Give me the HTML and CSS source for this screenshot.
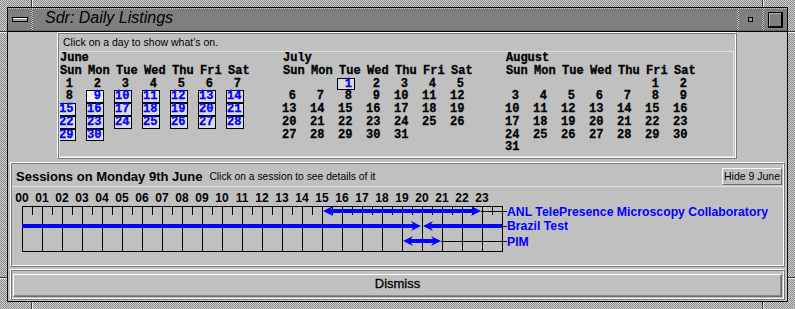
FILE: index.html
```html
<!DOCTYPE html>
<html lang="en">
<head>
  <meta charset="UTF-8">
  <title>Sdr: Daily Listings</title>
  <link rel="stylesheet" href="styles.css">
</head>
<body>
  <div class="frame">
    <span class="notch v" style="left:31px;top:0"></span>
    <span class="notch v" style="left:762px;top:0"></span>
    <span class="notch v" style="left:31px;top:302px"></span>
    <span class="notch v" style="left:762px;top:302px"></span>
    <span class="notch h" style="left:0;top:31px"></span>
    <span class="notch h" style="left:788px;top:31px"></span>
    <span class="notch h" style="left:0;top:277px"></span>
    <span class="notch h" style="left:788px;top:277px"></span>

    <div class="window">
      <div class="titlebar">
        <div class="tb-menu"><span class="menu-bar"></span></div>
        <span class="tb-sep"></span>
        <div class="tb-title">Sdr: Daily Listings</div>
        <span class="tb-sep"></span>
        <div class="tb-btn"><span class="min-dot"></span></div>
        <span class="tb-sep"></span>
        <div class="tb-btn"><span class="max-box"></span></div>
      </div>

      <div class="content">
        <div class="ridge cal-panel">
          <div class="hint">Click on a day to show what’s on.</div>
          <div class="cal-box">
            <div class="month">
              <div class="mname">June</div>
              <div>Sun</div><div>Mon</div><div>Tue</div><div>Wed</div><div>Thu</div><div>Fri</div><div>Sat</div>
              <span class="d">1</span><span class="d">2</span><span class="d">3</span><span class="d">4</span><span class="d">5</span><span class="d">6</span><span class="d">7</span>
              <span class="d">8</span><span class="d on sel">9</span><span class="d on">10</span><span class="d on">11</span><span class="d on">12</span><span class="d on">13</span><span class="d on">14</span>
              <span class="d on">15</span><span class="d on">16</span><span class="d on">17</span><span class="d on">18</span><span class="d on">19</span><span class="d on">20</span><span class="d on">21</span>
              <span class="d on">22</span><span class="d on">23</span><span class="d on">24</span><span class="d on">25</span><span class="d on">26</span><span class="d on">27</span><span class="d on">28</span>
              <span class="d on">29</span><span class="d on">30</span>
            </div>
            <div class="month">
              <div class="mname">July</div>
              <div>Sun</div><div>Mon</div><div>Tue</div><div>Wed</div><div>Thu</div><div>Fri</div><div>Sat</div>
              <span class="d on tue">1</span><span class="d">2</span><span class="d">3</span><span class="d">4</span><span class="d">5</span>
              <span class="d">6</span><span class="d">7</span><span class="d">8</span><span class="d">9</span><span class="d">10</span><span class="d">11</span><span class="d">12</span>
              <span class="d">13</span><span class="d">14</span><span class="d">15</span><span class="d">16</span><span class="d">17</span><span class="d">18</span><span class="d">19</span>
              <span class="d">20</span><span class="d">21</span><span class="d">22</span><span class="d">23</span><span class="d">24</span><span class="d">25</span><span class="d">26</span>
              <span class="d">27</span><span class="d">28</span><span class="d">29</span><span class="d">30</span><span class="d">31</span>
            </div>
            <div class="month">
              <div class="mname">August</div>
              <div>Sun</div><div>Mon</div><div>Tue</div><div>Wed</div><div>Thu</div><div>Fri</div><div>Sat</div>
              <span class="d fri">1</span><span class="d">2</span>
              <span class="d">3</span><span class="d">4</span><span class="d">5</span><span class="d">6</span><span class="d">7</span><span class="d">8</span><span class="d">9</span>
              <span class="d">10</span><span class="d">11</span><span class="d">12</span><span class="d">13</span><span class="d">14</span><span class="d">15</span><span class="d">16</span>
              <span class="d">17</span><span class="d">18</span><span class="d">19</span><span class="d">20</span><span class="d">21</span><span class="d">22</span><span class="d">23</span>
              <span class="d">24</span><span class="d">25</span><span class="d">26</span><span class="d">27</span><span class="d">28</span><span class="d">29</span><span class="d">30</span>
              <span class="d">31</span>
            </div>
          </div>
        </div>

        <div class="ridge sessions">
          <div class="sess-head">
            <span class="sess-title">Sessions on Monday 9th June</span>
            <span class="sess-hint">Click on a session to see details of it</span>
            <button type="button" class="hide-btn">Hide 9 June</button>
          </div>
          <div class="timeline">
            <div class="hours">
              <span>00</span><span>01</span><span>02</span><span>03</span><span>04</span><span>05</span>
              <span>06</span><span>07</span><span>08</span><span>09</span><span>10</span><span>11</span>
              <span>12</span><span>13</span><span>14</span><span>15</span><span>16</span><span>17</span>
              <span>18</span><span>19</span><span>20</span><span>21</span><span>22</span><span>23</span>
            </div>
            <svg class="chart" width="768" height="50" viewBox="0 0 768 50">
              <!-- hour grid -->
              <path class="grid" d="M10 1.5H491M10 46.5H491
                M10.5 1V47M30.5 1V47M50.5 1V47M70.5 1V47M90.5 1V47M110.5 1V47M130.5 1V47M150.5 1V47M170.5 1V47
                M190.5 1V47M210.5 1V47M230.5 1V47M250.5 1V47M270.5 1V47M290.5 1V47M310.5 1V47M330.5 1V47
                M350.5 1V47M370.5 1V47M390.5 1V47M410.5 1V47M430.5 1V47M450.5 1V47M470.5 1V47M490.5 1V47"/>
              <!-- half hour ticks -->
              <path class="grid" d="M20.5 2V10M40.5 2V10M60.5 2V10M80.5 2V10M100.5 2V10M120.5 2V10M140.5 2V10M160.5 2V10
                M180.5 2V10M200.5 2V10M220.5 2V10M240.5 2V10M260.5 2V10M280.5 2V10M300.5 2V10M320.5 2V10
                M340.5 2V10M360.5 2V10M380.5 2V10M400.5 2V10M420.5 2V10M440.5 2V10M460.5 2V10M480.5 2V10"/>

              <!-- ANL TelePresence -->
              <polygon class="bar" points="311,6 321,1 319,4 461,4 459,1 469,6 459,11 461,8 319,8 321,11"/>
              <path class="lead" d="M469 6.5H495"/>
              <text x="495" y="10.5">ANL TelePresence Microscopy Collaboratory</text>

              <!-- Brazil Test -->
              <polygon class="bar" points="10,19 401,19 399,16 409,21 399,26 401,23 10,23"/>
              <polygon class="bar" points="411,21 421,16 419,19 490,19 490,23 419,23 421,26"/>
              <path class="lead" d="M490 21.5H495"/>
              <text x="495" y="25">Brazil Test</text>

              <!-- PIM -->
              <polygon class="bar" points="391,36 401,31 399,34 421,34 419,31 429,36 419,41 421,38 399,38 401,41"/>
              <path class="lead" d="M429 36.5H495"/>
              <text x="495" y="40.5">PIM</text>
            </svg>
          </div>
        </div>

        <div class="ridge dismiss-bar">
          <button type="button" class="dismiss">Dismiss</button>
        </div>
      </div>
    </div>
  </div>
</body>
</html>
```

FILE: styles.css
```css
body {
  margin: 0;
  background: #c0c0c0;
}

.frame {
  position: relative;
  width: 795px;
  height: 309px;
  box-sizing: border-box;
  padding: 7px;
  background: repeating-conic-gradient(#d2d2d2 0 25%, #888 0 50%) 0 0 / 2px 2px;
  font-family: "Liberation Sans", Arial, sans-serif;
  color: #000;
}

.notch {
  position: absolute;
  background: #3a3a3a;
}

.notch.v {
  width: 1px;
  height: 7px;
  border-right: 1px solid #ececec;
}

.notch.h {
  width: 7px;
  height: 1px;
  border-bottom: 1px solid #ececec;
}

.window {
  height: 100%;
  box-sizing: border-box;
  border: 1px solid #000;
  background: #c0c0c0;
  display: flex;
  flex-direction: column;
}

/* title bar */
.titlebar {
  display: flex;
  height: 23px;
  box-sizing: border-box;
  background: #7f7f7f;
  border-top: 1px dotted #c8c8c8;
  border-bottom: 1px dotted #4c4c4c;
}

.tb-menu,
.tb-btn {
  width: 23px;
  display: flex;
  align-items: center;
  justify-content: center;
}

.tb-sep {
  width: 2px;
  background: repeating-conic-gradient(#c8c8c8 0 25%, #5a5a5a 0 50%) 0 0 / 2px 2px;
}

.menu-bar {
  width: 16px;
  height: 5px;
  box-sizing: border-box;
  border: 1px solid #000;
  background: #9a9a9a;
  box-shadow: inset 0 1px 0 #fff;
}

.tb-title {
  flex: 1;
  padding-left: 12px;
  font: italic 16px/18px "Liberation Sans", Arial, sans-serif;
}

.min-dot {
  width: 5px;
  height: 5px;
  box-sizing: border-box;
  border: 1px solid #000;
  background: #9a9a9a;
}

.max-box {
  width: 15px;
  height: 16px;
  box-sizing: border-box;
  border: solid #000;
  border-width: 1px 2px 2px 1px;
  background: #808080;
  box-shadow: inset 1px 1px 0 #a8a8a8;
}

/* body of the window */
.content {
  flex: 1;
  border-top: 1px solid #000;
  display: flex;
  flex-direction: column;
}

.ridge {
  box-sizing: border-box;
  border: 1px solid;
  border-color: #fff #7a7a7a #7a7a7a #fff;
  box-shadow: inset 1px 1px 0 #7a7a7a, inset -1px -1px 0 #fff;
  padding: 1px;
}

.cal-panel {
  width: 680px;
  height: 127px;
  margin-left: 49px;
  display: flex;
  flex-direction: column;
}

.hint {
  height: 17px;
  padding-left: 4px;
  font-size: 10.5px;
  line-height: 17px;
}

.cal-box {
  flex: 1;
  margin-right: 1px;
  border: 1px solid #dedede;
  display: flex;
  gap: 27px;
  overflow: hidden;
}

.month {
  display: grid;
  grid-template-columns: repeat(7, 28px);
  grid-auto-rows: 12.75px;
  font: bold 12px/12.75px "Liberation Mono", "Courier New", monospace;
  -webkit-text-stroke: 0.3px #000;
}

.mname {
  grid-column: 1 / 8;
}

.d {
  width: 18px;
  margin-left: -2px;
  box-sizing: border-box;
  border: 1px solid transparent;
  padding-right: 2px;
  text-align: right;
  line-height: 10.75px;
}

.d.on {
  border-color: #000;
  background: #dcdcdc;
  color: #00f;
  -webkit-text-stroke: 0.3px #00f;
}

.d.sel {
  background: #efefef;
}

.tue {
  grid-column-start: 3;
}

.fri {
  grid-column-start: 6;
}

/* sessions */
.sessions {
  height: 105px;
  margin: 3px 2px 0;
  display: flex;
  flex-direction: column;
}

.sess-head {
  height: 22px;
  box-sizing: border-box;
  padding: 2px 1px 0 4px;
  display: flex;
  align-items: center;
}

.sess-title {
  font-size: 13px;
  font-weight: bold;
}

.sess-hint {
  margin-left: 7px;
  font-size: 10.3px;
}

.hide-btn {
  margin-left: auto;
  width: 60px;
  height: 17px;
  padding: 0;
  box-sizing: border-box;
  border: 1px solid;
  border-color: #fff #6a6a6a #6a6a6a #fff;
  background: #c0c0c0;
  font: 10.5px "Liberation Sans", Arial, sans-serif;
  color: #000;
}

.timeline {
  flex: 1;
  border-top: 1px solid #e2e2e2;
}

.hours {
  display: flex;
  margin-top: 4px;
  font: bold 12px/14px "Liberation Sans", Arial, sans-serif;
}

.hours span {
  width: 20px;
  text-align: center;
}

.chart {
  display: block;
}

.chart .grid {
  fill: none;
  stroke: #000;
  stroke-width: 1;
}

.chart .bar {
  fill: #00f;
}

.chart .lead {
  fill: none;
  stroke: #000;
  stroke-width: 1;
}

.chart text {
  fill: #00f;
  font: bold 12.25px "Liberation Sans", Arial, sans-serif;
}

/* dismiss */
.dismiss-bar {
  height: 31px;
  margin: 2px 2px 0;
  padding: 4px 2px 2px;
}

.dismiss {
  display: block;
  width: 100%;
  height: 23px;
  padding: 0 0 4px;
  box-sizing: border-box;
  border: 1px solid;
  border-color: #fff #6a6a6a #6a6a6a #fff;
  box-shadow: inset -1px -1px 0 #8a8a8a;
  background: #c0c0c0;
  font: 13px "Liberation Sans", Arial, sans-serif;
  -webkit-text-stroke: 0.3px #000;
  color: #000;
}
```
